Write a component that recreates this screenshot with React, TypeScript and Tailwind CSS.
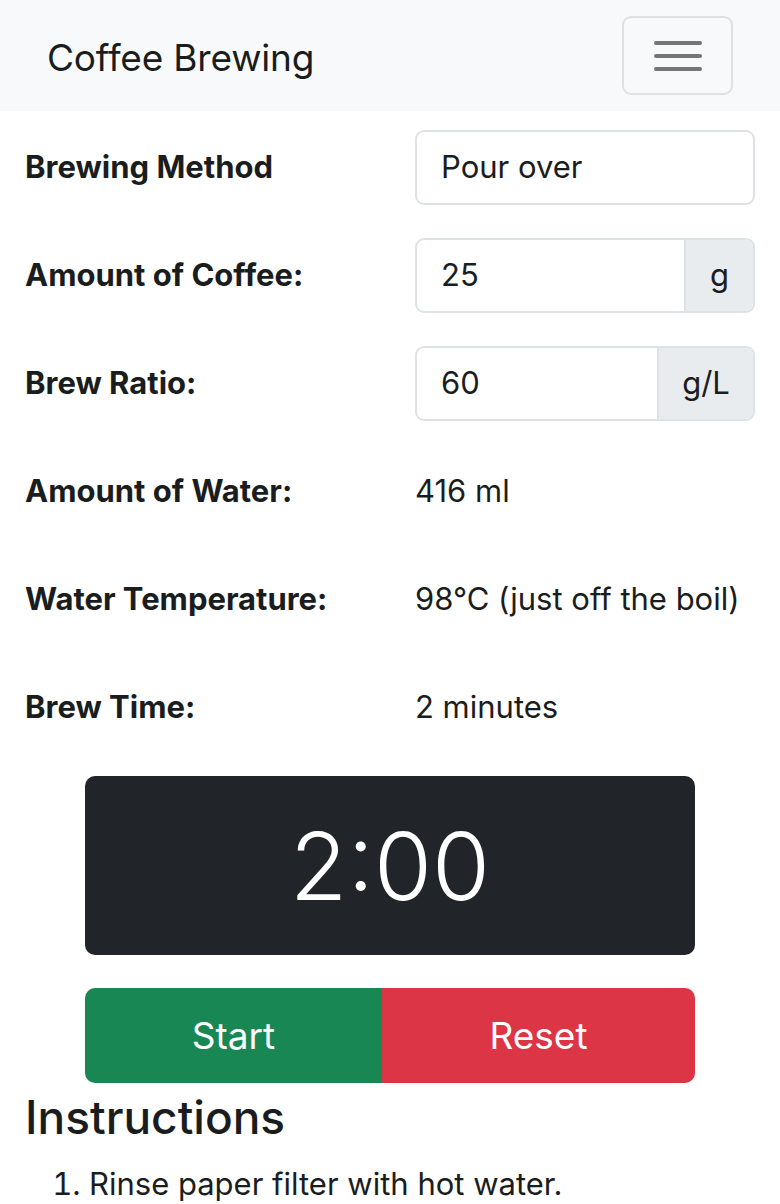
export default function App() {
  const rows: { label: string; value: React.ReactNode }[] = [
    {
      label: "Brewing Method",
      value: (
        <div className="flex h-[75px] w-full items-center rounded-[9px] border-2 border-[#dee2e6] px-6">
          Pour over
        </div>
      ),
    },
    {
      label: "Amount of Coffee:",
      value: (
        <div className="flex h-[75px] w-full overflow-hidden rounded-[9px] border-2 border-[#dee2e6]">
          <div className="flex flex-1 items-center px-6">25</div>
          <div className="flex w-[69px] items-center justify-center border-l-2 border-[#dee2e6] bg-[#e9ecef]">g</div>
        </div>
      ),
    },
    {
      label: "Brew Ratio:",
      value: (
        <div className="flex h-[75px] w-full overflow-hidden rounded-[9px] border-2 border-[#dee2e6]">
          <div className="flex flex-1 items-center px-6">60</div>
          <div className="flex w-[96px] items-center justify-center border-l-2 border-[#dee2e6] bg-[#e9ecef]">g/L</div>
        </div>
      ),
    },
    { label: "Amount of Water:", value: "416 ml" },
    { label: "Water Temperature:", value: "98°C (just off the boil)" },
    { label: "Brew Time:", value: "2 minutes" },
  ];

  return (
    <div className="min-h-[1204px] bg-white text-[#1a1d20]" style={{ fontFamily: "Inter, 'Noto Sans', sans-serif" }}>
      {/* Navbar */}
      <nav className="flex h-[111px] items-center justify-between bg-[#f8f9fa] px-[47px]">
        <span className="mt-[4px] text-[37px] leading-none tracking-[-0.005em]">Coffee Brewing</span>
        <button className="flex h-[79px] w-[111px] flex-col items-center justify-center gap-[9px] rounded-[9px] border-2 border-[#e0e0e0]">
          <span className="block h-[4px] w-[48px] rounded bg-[#757575]" />
          <span className="block h-[4px] w-[48px] rounded bg-[#757575]" />
          <span className="block h-[4px] w-[48px] rounded bg-[#757575]" />
        </button>
      </nav>

      {/* Form rows */}
      <div className="px-[25px] pt-[2px] text-[31px]">
        {rows.map((r) => (
          <div key={r.label} className="grid h-[108px] grid-cols-[390px_1fr] items-center">
            <div className="font-bold">{r.label}</div>
            <div>{r.value}</div>
          </div>
        ))}
      </div>

      {/* Timer */}
      <div className="mx-auto mt-[15px] flex h-[179px] w-[610px] items-center justify-center rounded-[10px] bg-[#212529] text-[94px] font-light leading-none text-white">
        2:00
      </div>

      <div className="mx-auto mt-[33px] flex h-[95px] w-[610px] overflow-hidden rounded-[10px] text-[37px] text-white">
        <button className="flex w-[297px] items-center justify-center bg-[#198754]">Start</button>
        <button className="flex flex-1 items-center justify-center bg-[#dc3545]">Reset</button>
      </div>

      {/* Instructions */}
      <div className="px-[25px]">
        <h3 className="mt-[6px] text-[46px] font-medium leading-tight">Instructions</h3>
        <ol className="mt-[14px] list-decimal pl-[64px] text-[31px]">
          <li>Rinse paper filter with hot water.</li>
        </ol>
      </div>
    </div>
  );
}
